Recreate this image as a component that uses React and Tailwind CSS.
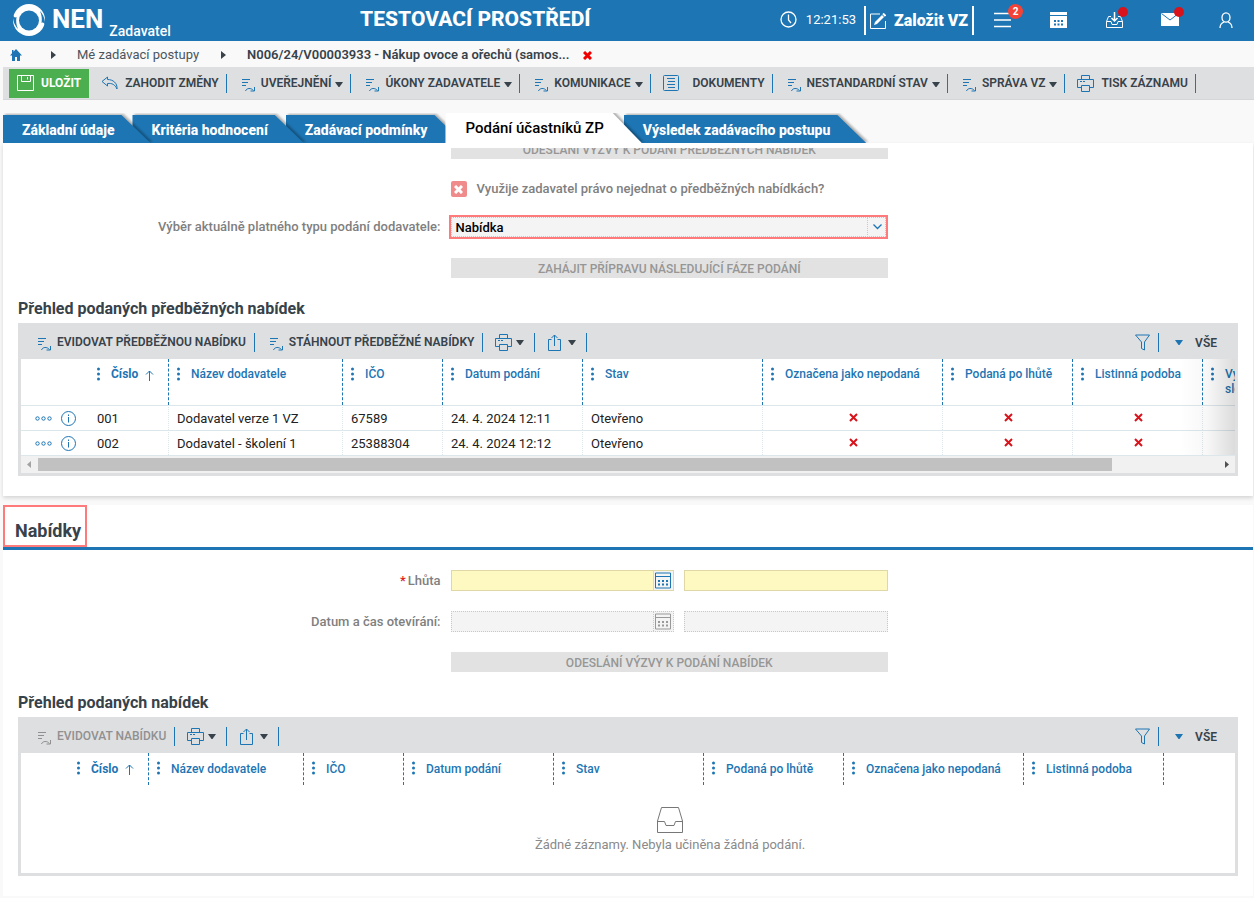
// Stránka zadávacího postupu: hlavička, panel akcí, záložky a formuláře nabídek

/* ── Ikony ─────────────────────────────────────────────────────────────── */

function Logo() {
  return (
    <svg width="34" height="34" viewBox="0 0 34 34" aria-hidden="true">
      <circle cx="17" cy="17" r="16" fill="#fff" />
      <circle cx="17" cy="17.500" r="10" fill="#1d75b3" />
      <path d="M1 12C1.500 14 3 15 4.500 14C3.800 18 4.200 22 6 26C2.500 22 .500 17 1 12Z" fill="#1d75b3" />
      <path d="M33 22C32.500 20 31 19 29.500 20C30.200 16 29.800 12 28 8C31.500 12 33.500 17 33 22Z" fill="#1d75b3" />
    </svg>
  );
}

function TaskIcon() {
  return (
    <svg width="15" height="14" viewBox="0 0 15 14" fill="none" stroke="currentColor" className="shrink-0" aria-hidden="true">
      <path d="M1 1.500H9M1 4.500H7M1 7.500H5" />
      <path d="M4.500 13C5.500 10 10 9.500 12.500 12.500" />
      <path d="M13.500 9V13H9.500" />
    </svg>
  );
}

function PrinterIcon() {
  return (
    <svg width="17" height="17" viewBox="0 0 17 17" fill="none" stroke="currentColor" className="shrink-0" aria-hidden="true">
      <path d="M4.500 4V.500H12.500V4M4.500 12.500H.500V4.500H16.500V12.500H12.500M4.500 10.500H12.500V16.500H4.500Z" />
      <path d="M3 6.500H5M6 6.500H8" />
    </svg>
  );
}

function ShareIcon() {
  return (
    <svg width="15" height="17" viewBox="0 0 15 17" fill="none" stroke="currentColor" className="shrink-0" aria-hidden="true">
      <path d="M4.500 5.500H1.500V16.500H13.500V5.500H10.500M7.500 12V1M4.500 4L7.500 1L10.500 4" />
    </svg>
  );
}

function UndoIcon() {
  return (
    <svg width="17" height="14" viewBox="0 0 17 14" fill="none" stroke="currentColor" strokeLinejoin="round" className="shrink-0" aria-hidden="true">
      <path d="M6.500 1L1 5.500L6.500 10V7.500C11 7 14 8.500 16 13C16.500 7 12 3.500 6.500 3.500Z" />
    </svg>
  );
}

function DocumentIcon() {
  return (
    <svg width="17" height="17" viewBox="0 0 17 17" fill="none" stroke="currentColor" className="shrink-0" aria-hidden="true">
      <rect x=".5" y=".5" width="15" height="15" rx="1" />
      <path d="M4 3.500H12M5 6.500H12M4 9.500H12M5 12.500H12" />
    </svg>
  );
}

function SaveIcon() {
  return (
    <svg width="17" height="17" viewBox="0 0 17 17" fill="none" stroke="currentColor" className="shrink-0" aria-hidden="true">
      <path d="M.5 .5H16.500V15.500H.500ZM4.500 .5V6.500H13.500V.500M10.500 2V4.500" />
    </svg>
  );
}

function FilterIcon() {
  return (
    <svg width="15" height="17" viewBox="0 0 15 17" fill="none" stroke="currentColor" aria-hidden="true">
      <path d="M.5 1H14.500L9.500 8V16L6.500 14.500V8Z" />
    </svg>
  );
}

function Caret() {
  return (
    <svg width="8" height="5" viewBox="0 0 8 5" fill="currentColor" className="shrink-0" aria-hidden="true">
      <path d="M0 0H8L4.500 5H3.500Z" />
    </svg>
  );
}

function CalendarIcon() {
  return (
    <svg width="16" height="17" viewBox="0 0 16 17" fill="none" stroke="currentColor" aria-hidden="true">
      <path d="M.5 1H15.500V16H.500ZM.5 4.500H15.500" />
      <path d="M3 9H13M3 12.500H13" strokeWidth="2" strokeDasharray="2 2" />
    </svg>
  );
}

function CrossIcon({ className = "" }) {
  return (
    <svg width="9" height="9" viewBox="0 0 9 9" stroke="currentColor" strokeWidth="2" className={className} role="img" aria-label="Ne">
      <path d="M1 1L8 8M8 1L1 8" />
    </svg>
  );
}

function Kebab() {
  return (
    <svg width="3" height="14" viewBox="0 0 3 14" fill="currentColor" className="shrink-0" aria-hidden="true">
      <circle cx="1.500" cy="2" r="1.500" />
      <circle cx="1.500" cy="7" r="1.500" />
      <circle cx="1.500" cy="12" r="1.500" />
    </svg>
  );
}

/* ── Hlavička ──────────────────────────────────────────────────────────── */

function Header() {
  return (
    <header className="h-[41px] bg-[#1d75b3] text-white flex items-center">
      <a href="#" className="flex items-center pl-3 pb-0.5 h-full">
        <Logo />
        <span className="ml-1.5 text-[26px] font-bold">NEN</span>
        <span className="ml-1.5 self-end text-[14px] leading-4 font-medium">Zadavatel</span>
      </a>
      <div className="flex-1 pb-0.5 text-center text-[21px] font-extrabold">TESTOVACÍ PROSTŘEDÍ</div>

      <svg width="17" height="17" viewBox="0 0 17 17" fill="none" stroke="currentColor" className="mb-0.5" aria-hidden="true">
        <circle cx="8.500" cy="8.500" r="7.500" strokeWidth="1.300" />
        <path d="M8.500 3.500V9L11 12" strokeWidth="1.300" />
      </svg>
      <time className="ml-[9px] mr-2 pb-0.5 text-[13px]">12:21:53</time>

      <button className="h-[29px] px-1 border-x-2 border-white flex items-center gap-2 text-base font-black whitespace-nowrap">
        <svg width="16" height="16" viewBox="0 0 16 16" fill="none" stroke="currentColor" aria-hidden="true">
          <path d="M10 1H.500V15.500H15.500V8" />
          <path d="M4 12L5 9L12 2L14 4L7 11Z" fill="currentColor" stroke="none" />
          <path d="M13 .5L15.500 3" strokeWidth="2" />
        </svg>
        Založit VZ
      </button>

      <button className="relative w-14 h-full pb-0.5 flex items-center justify-center" aria-label="Nabídka">
        <svg width="17" height="16" viewBox="0 0 17 16" stroke="currentColor" strokeWidth="1.500" aria-hidden="true">
          <path d="M0 1.500H17M0 8H17M0 14.500H17" />
        </svg>
        <span className="absolute top-1 left-[34px] size-[15px] rounded-full bg-[#f44336] text-[10px] leading-[15px] font-bold text-center">2</span>
      </button>
      <button className="w-14 h-full pb-0.5 flex items-center justify-center" aria-label="Kalendář">
        <svg width="17" height="16" viewBox="0 0 17 16" fill="currentColor" aria-hidden="true">
          <path d="M0 0H17V3H0ZM0 4H17V16H0Z" />
          <path d="M4 8H6V10H4ZM7.500 8H9.500V10H7.500ZM11 8H13V10H11ZM4 11.500H6V13.500H4ZM7.500 11.500H9.500V13.500H7.500ZM11 11.500H13V13.500H11Z" fill="#1d75b3" />
        </svg>
      </button>
      <button className="relative w-14 h-full pb-0.5 flex items-center justify-center" aria-label="Doručené">
        <svg width="17" height="17" viewBox="0 0 17 17" fill="none" stroke="currentColor" aria-hidden="true">
          <path d="M5 5.500H2.500L.500 10.500V16.500H16.500V10.500L14.500 5.500H12" />
          <path d="M.5 10.500H5L6 13.500H11L12 10.500H16.500" />
          <path d="M8.500 1V10M5.500 7L8.500 10L11.500 7" strokeWidth="1.500" />
        </svg>
        <span className="absolute top-[7px] left-8 size-2.5 rounded-full bg-[#d8131b]" />
      </button>
      <button className="relative w-14 h-full pb-0.5 flex items-center justify-center" aria-label="Zprávy">
        <svg width="18" height="13" viewBox="0 0 18 13" aria-hidden="true">
          <path d="M0 0H18V13H0Z" fill="currentColor" />
          <path d="M.5 .5L9 7L17.500 .5" fill="none" stroke="#1d75b3" />
        </svg>
        <span className="absolute top-[7px] left-8 size-2.5 rounded-full bg-[#d8131b]" />
      </button>
      <button className="w-14 h-full pb-0.5 flex items-center justify-center" aria-label="Uživatel">
        <svg width="14" height="16" viewBox="0 0 14 16" fill="none" stroke="currentColor" strokeWidth="1.300" aria-hidden="true">
          <ellipse cx="7" cy="5.500" rx="4" ry="4.700" />
          <path d="M1 16C1 12.500 2.500 11 5 10M13 16C13 12.500 11.500 11 9 10" />
        </svg>
      </button>
    </header>
  );
}

function Arrow() {
  return (
    <svg width="5" height="8" viewBox="0 0 5 8" fill="#37424a" aria-hidden="true">
      <path d="M0 0L5 4L0 8Z" />
    </svg>
  );
}

function Breadcrumb() {
  return (
    <nav className="h-[26px] pl-2.5 pt-0.5 flex items-center text-[13px] text-[#37424a]">
      <a href="#" aria-label="Domů" className="text-[#1d75b3]">
        <svg width="12" height="12" viewBox="0 0 12 12" fill="currentColor" aria-hidden="true">
          <path d="M6 0L12 6.500H10V12H7V8H5V12H2V6.500H0L2 4.300V1H3.500V2.700Z" />
        </svg>
      </a>
      <span className="ml-[29px]"><Arrow /></span>
      <a href="#" className="ml-[21px] text-[#4a555d]">Mé zadávací postupy</a>
      <span className="ml-[22px]"><Arrow /></span>
      <a href="#" className="ml-[21px] font-semibold">N006/24/V00003933 - Nákup ovoce a ořechů (samos...</a>
      <button className="ml-3.5 text-[#f00000]" aria-label="Zavřít">
        <svg width="9" height="9" viewBox="0 0 9 9" stroke="currentColor" strokeWidth="3" aria-hidden="true">
          <path d="M1 1L8 8M8 1L1 8" />
        </svg>
      </button>
    </nav>
  );
}

/* ── Panel akcí ────────────────────────────────────────────────────────── */

const actions = [
  { label: "UVEŘEJNĚNÍ", caret: true },
  { label: "ÚKONY ZADAVATELE", caret: true },
  { label: "KOMUNIKACE", caret: true },
  { label: "DOKUMENTY", icon: <DocumentIcon />, wide: true },
  { label: "NESTANDARDNÍ STAV", caret: true },
  { label: "SPRÁVA VZ", caret: true },
  { label: "TISK ZÁZNAMU", icon: <PrinterIcon /> },
];

function ActionBar() {
  return (
    <div className="ml-[3px] h-[33px] pl-1.5 bg-[#dedfe1] border-b border-[#d5d6d8] flex items-center text-xs font-semibold text-[#37424a] whitespace-nowrap">
      <button className="h-[29px] px-2 bg-[#4bae4f] text-white font-bold flex items-center gap-[7px]">
        <SaveIcon />
        ULOŽIT
      </button>
      <button className="h-[19px] pl-3 pr-[7px] border-r border-[#1d75b3] flex items-center gap-[7px]">
        <span className="text-[#1d75b3]"><UndoIcon /></span>
        ZAHODIT ZMĚNY
      </button>
      {actions.map((a) => (
        <button
          key={a.label}
          className={`h-[19px] border-r border-[#1d75b3] flex items-center ${a.icon ? "pl-3 pr-[7px]" : "pl-3.5 pr-[7px]"}`}
        >
          <span className={`text-[#1d75b3] ${a.wide ? "mr-[13px]" : a.icon ? "mr-[7px]" : "mr-[5px] pt-1"}`}>
            {a.icon || <TaskIcon />}
          </span>
          {a.label}
          {a.caret && <span className="ml-1 pt-0.5"><Caret /></span>}
        </button>
      ))}
    </div>
  );
}

/* ── Záložky ───────────────────────────────────────────────────────────── */

const tabs = [
  { label: "Základní údaje", z: "z-30" },
  { label: "Kritéria hodnocení", z: "z-20" },
  { label: "Zadávací podmínky", z: "z-10" },
  { label: "Podání účastníků ZP", z: "z-40", active: true },
  { label: "Výsledek zadávacího postupu", z: "z-0" },
];

function Tabs() {
  return (
    <div role="tablist" className="isolate mt-[13px] ml-[3px] h-[30px] flex items-end overflow-hidden">
      {tabs.map((t) => (
        <button
          key={t.label}
          role="tab"
          aria-selected={!!t.active}
          className={`relative whitespace-nowrap ${t.z} ${
            t.active
              ? "h-[30px] px-5 text-[15px] font-medium text-black"
              : "h-7 pl-[19px] pr-[18px] pt-0.5 text-sm font-extrabold text-white"
          }`}
        >
          <span className="absolute inset-y-0 left-0 -right-[18px] -z-10 drop-shadow-[2px_-1px_1px_rgba(0,0,0,0.3)]">
            <span
              className={`block h-full [clip-path:polygon(0_0,calc(100%_-_29px)_0,100%_100%,0_100%)] ${
                t.active ? "bg-white" : "bg-[#1d75b3]"
              }`}
            />
          </span>
          {t.label}
        </button>
      ))}
    </div>
  );
}

/* ── Formulář ──────────────────────────────────────────────────────────── */

function Field({ label, htmlFor, required, children }) {
  return (
    <div className="flex items-center gap-2.5">
      <div className="w-[35%] text-right text-[13px] leading-5 font-medium text-[#808080]">
        {required && <span className="mr-0.5 text-[#e02020]">*</span>}
        {label && <label htmlFor={htmlFor}>{label}</label>}
      </div>
      <div className="w-[35%]">{children}</div>
    </div>
  );
}

function WideButton({ children }) {
  return (
    <button disabled className="block w-full h-5 pt-px bg-[#e2e2e2] text-center text-xs leading-5 font-medium text-[#969696]">
      {children}
    </button>
  );
}

function DateTimeField({ id, disabled }) {
  const tone = disabled ? "border-dotted border-[#c8c8c8] bg-[#f4f4f4]" : "border-[#dfd7a5] bg-[#fef8c1]";
  return (
    <div className="flex gap-2.5">
      <div className={`flex-1 min-w-0 flex h-[21px] border ${tone}`}>
        <input id={id} disabled={disabled} className="flex-1 min-w-0" />
        <button
          disabled={disabled}
          aria-label="Vybrat datum"
          className={`w-5 pl-px border-l bg-[#f4f4f4] ${
            disabled ? "border-dotted border-[#c8c8c8] text-[#999]" : "border-[#d8d8d8] text-[#1d75b3]"
          }`}
        >
          <CalendarIcon />
        </button>
      </div>
      <input disabled={disabled} aria-label="Čas" className={`w-[204px] h-[21px] border ${tone}`} />
    </div>
  );
}

/* ── Tabulky ───────────────────────────────────────────────────────────── */

function GridToolbar({ buttons, disabled }) {
  return (
    <div className="h-9 pt-[3px] pl-4 pr-[18px] flex items-center text-xs font-semibold text-[#37424a] whitespace-nowrap">
      {buttons.map((b, i) => (
        <button
          key={b}
          disabled={disabled}
          className={`h-[19px] pb-px pr-2 border-r border-[#1d75b3] flex items-center gap-[5px] ${i ? "pl-3.5" : ""} ${
            disabled ? "font-medium text-[#909090]" : ""
          }`}
        >
          <span className={`pt-1 ${disabled ? "" : "text-[#1d75b3]"}`}><TaskIcon /></span>
          {b}
        </button>
      ))}
      <button aria-label="Tisk" className="h-[19px] pl-3 pr-2.5 border-r border-[#1d75b3] flex items-center gap-1">
        <span className="text-[#1d75b3]"><PrinterIcon /></span>
        <Caret />
      </button>
      <button aria-label="Export" className="h-[19px] pl-3 pr-2.5 border-r border-[#1d75b3] flex items-center gap-1.5">
        <span className="text-[#1d75b3]"><ShareIcon /></span>
        <Caret />
      </button>
      <button aria-label="Filtr" className="ml-auto h-[19px] pr-2 border-r border-[#1d75b3] flex items-center text-[#1d75b3]">
        <FilterIcon />
      </button>
      <button className="pl-4 flex items-center gap-3">
        <span className="text-[#1d75b3]"><Caret /></span>
        VŠE
      </button>
    </div>
  );
}

function HeadCell({ label, sorted, tall }) {
  return (
    <th
      scope="col"
      className={`p-0 pt-2 align-top text-left text-xs font-medium border-r border-dashed border-[#1d75b3] ${
        tall ? "h-[46px]" : "h-8"
      }`}
    >
      <div className={`pl-2 flex gap-[11px] ${tall ? "leading-[15px]" : "leading-4"} ${sorted ? "font-bold" : ""}`}>
        <Kebab />
        <span>{label}</span>
        {sorted && (
          <svg width="9" height="11" viewBox="0 0 9 11" fill="none" stroke="currentColor" className="-ml-1 mt-[3px]" aria-hidden="true">
            <path d="M4.500 11V1M1 4.500L4.500 1L8 4.500" />
          </svg>
        )}
      </div>
    </th>
  );
}

const preliminary = [
  ["001", "Dodavatel verze 1 VZ", "67589", "24. 4. 2024 12:11", "Otevřeno"],
  ["002", "Dodavatel - školení 1", "25388304", "24. 4. 2024 12:12", "Otevřeno"],
];

function PreliminaryTable() {
  return (
    <div className="relative overflow-hidden bg-white">
      <table className="w-[1272px] table-fixed border-separate border-spacing-0">
        <colgroup>
          <col className="w-[68px]" />
          <col className="w-20" />
          <col className="w-[174px]" />
          <col className="w-[100px]" />
          <col className="w-[140px]" />
          <col className="w-[180px]" />
          <col className="w-[180px]" />
          <col className="w-[130px]" />
          <col className="w-[130px]" />
          <col className="w-[90px]" />
        </colgroup>
        <thead className="text-[#1d75b3]">
          <tr>
            <td />
            <HeadCell label="Číslo" sorted tall />
            <HeadCell label="Název dodavatele" tall />
            <HeadCell label="IČO" tall />
            <HeadCell label="Datum podání" tall />
            <HeadCell label="Stav" tall />
            <HeadCell label="Označena jako nepodaná" tall />
            <HeadCell label="Podaná po lhůtě" tall />
            <HeadCell label="Listinná podoba" tall />
            <HeadCell label="Vyloučen sloučen" tall />
          </tr>
        </thead>
        <tbody className="text-[13px] leading-5 text-[#222]">
          {preliminary.map((row) => (
            <tr key={row[0]}>
              <td className="h-[25px] p-0 pl-3.5 border-t border-[#dce7ec]">
                <div className="h-6 flex items-center gap-[9px] text-[#1d75b3]">
                  <button aria-label="Akce">
                    <svg width="17" height="5" viewBox="0 0 17 5" fill="none" stroke="currentColor" aria-hidden="true">
                      <circle cx="2.500" cy="2.500" r="1.700" />
                      <circle cx="8.500" cy="2.500" r="1.700" />
                      <circle cx="14.500" cy="2.500" r="1.700" />
                    </svg>
                  </button>
                  <button aria-label="Detail">
                    <svg width="15" height="15" viewBox="0 0 15 15" fill="none" stroke="currentColor" aria-hidden="true">
                      <circle cx="7.500" cy="7.500" r="7" />
                      <path d="M7.500 6V11.500M7.500 3.500V5" />
                    </svg>
                  </button>
                </div>
              </td>
              {row.map((value, i) => (
                <td key={i} className="p-0 pt-0.5 pl-2 border-t border-t-[#dce7ec] border-r border-r-[#dce7ec] [border-right-style:dotted]">
                  {value}
                </td>
              ))}
              {[0, 1, 2].map((i) => (
                <td key={i} className="p-0 pb-0.5 pl-0.5 border-t border-t-[#dce7ec] border-r border-r-[#dce7ec] [border-right-style:dotted] text-[#d8131b]">
                  <CrossIcon className="mx-auto" />
                </td>
              ))}
              <td className="border-t border-[#dce7ec]" />
            </tr>
          ))}
        </tbody>
      </table>
      <div className="absolute inset-y-0 right-0 w-14 bg-linear-to-r from-transparent via-black/3 to-black/14" />
    </div>
  );
}

function ScrollBar() {
  return (
    <div className="h-[18px] border-t border-[#dce7ec] bg-[#f1f1f1] flex items-center justify-between px-1.5">
      <svg width="4" height="7" viewBox="0 0 4 7" fill="#a3a3a3" aria-hidden="true">
        <path d="M4 0V7L0 3.500Z" />
      </svg>
      <div className="flex-1 mx-[7px]">
        <div className="w-[91%] h-[13px] bg-[#c1c1c1]" />
      </div>
      <svg width="4" height="7" viewBox="0 0 4 7" fill="#505050" aria-hidden="true">
        <path d="M0 0V7L4 3.500Z" />
      </svg>
    </div>
  );
}

function OffersTable() {
  return (
    <div className="h-[120px] overflow-hidden bg-white">
      <table className="w-[1143px] table-fixed border-separate border-spacing-0">
        <colgroup>
          <col className="w-12" />
          <col className="w-20" />
          <col className="w-[155px]" />
          <col className="w-[100px]" />
          <col className="w-[150px]" />
          <col className="w-[150px]" />
          <col className="w-[140px]" />
          <col className="w-[180px]" />
          <col className="w-[140px]" />
        </colgroup>
        <thead className="text-[#1d75b3]">
          <tr>
            <td />
            <HeadCell label="Číslo" sorted />
            <HeadCell label="Název dodavatele" />
            <HeadCell label="IČO" />
            <HeadCell label="Datum podání" />
            <HeadCell label="Stav" />
            <HeadCell label="Podaná po lhůtě" />
            <HeadCell label="Označena jako nepodaná" />
            <HeadCell label="Listinná podoba" />
          </tr>
        </thead>
      </table>
      <div className="w-[1298px] pt-[22px] flex flex-col items-center text-[13px] text-[#8a8a8a]">
        <svg width="26" height="26" viewBox="0 0 26 26" fill="none" stroke="#777" aria-hidden="true">
          <path d="M4.500 .5H21.500L25.500 14V25.500H.5V14Z" />
          <path d="M.5 14.500H7.500L9 18.500H17L18.500 14.500H25.500" />
        </svg>
        <p className="mt-0.5">Žádné záznamy. Nebyla učiněna žádná podání.</p>
      </div>
    </div>
  );
}

/* ── Stránka ───────────────────────────────────────────────────────────── */

export default function App() {
  return (
    <div className="min-h-screen bg-[#f9f9f9] font-[Roboto,sans-serif]">
      <Header />
      <Breadcrumb />
      <ActionBar />
      <Tabs />

      <main className="ml-[3px] mr-px">
        <section className="pt-[5px] pb-5 bg-white shadow-[0_2px_4px_rgba(0,0,0,0.15)]">
          <div className="overflow-hidden">
            <div className="-mt-[9px]">
              <Field><WideButton>ODESLÁNÍ VÝZVY K PODÁNÍ PŘEDBĚŽNÝCH NABÍDEK</WideButton></Field>
            </div>
          </div>
          <div className="mt-5">
            <Field>
              <div className="flex items-center gap-2.5">
                <span className="relative size-4">
                  <input id="nejednat" type="checkbox" disabled className="block size-4 appearance-none rounded-[2px] bg-[#ef8b8b]" />
                  <CrossIcon className="absolute inset-0 m-auto text-white stroke-3" />
                </span>
                <label htmlFor="nejednat" className="text-[13px] leading-5 font-medium text-[#808080] whitespace-nowrap">
                  Využije zadavatel právo nejednat o předběžných nabídkách?
                </label>
              </div>
            </Field>
          </div>
          <div className="mt-4">
            <Field label="Výběr aktuálně platného typu podání dodavatele:" htmlFor="typ">
              <div className="relative -ml-0.5 h-6 border-2 border-[#ff7b7b] bg-[#f4f4f4]">
                <select id="typ" className="block w-full h-5 pl-1 pt-px appearance-none border border-dotted border-[#c8c8c8] text-[13px] leading-4 font-medium text-black">
                  <option>Nabídka</option>
                </select>
                <span className="absolute inset-y-0 right-0 w-[19px] border-l border-dotted border-[#c8c8c8] flex items-center justify-center text-[#1d75b3] pointer-events-none">
                  <svg width="9" height="6" viewBox="0 0 9 6" fill="none" stroke="currentColor" strokeWidth="1.300" aria-hidden="true">
                    <path d="M.5 .5L4.500 4.500L8.500 .5" />
                  </svg>
                </span>
              </div>
            </Field>
          </div>
          <div className="mt-[19px]">
            <Field><WideButton>ZAHÁJIT PŘÍPRAVU NÁSLEDUJÍCÍ FÁZE PODÁNÍ</WideButton></Field>
          </div>

          <div className="ml-[15px] mr-[15px]">
            <h3 className="mt-[21px] mb-1 text-base leading-5 font-bold text-[#37424a]">Přehled podaných předběžných nabídek</h3>
            <div className="px-[3px] pb-[3px] bg-[#dedfe1]">
              <GridToolbar buttons={["EVIDOVAT PŘEDBĚŽNOU NABÍDKU", "STÁHNOUT PŘEDBĚŽNÉ NABÍDKY"]} />
              <PreliminaryTable />
              <ScrollBar />
            </div>
          </div>
        </section>

        <section className="mt-[9px] pb-5 bg-white">
          <div className="border-b-3 border-[#1d75b3] flex">
            <h2 className="h-[42px] pl-2.5 pr-1 pt-2.5 border-2 border-[#ff7b7b] text-lg leading-7 font-bold text-[#37424a]">Nabídky</h2>
          </div>
          <div className="mt-5">
            <Field label="Lhůta" htmlFor="lhuta" required><DateTimeField id="lhuta" /></Field>
          </div>
          <div className="mt-5">
            <Field label="Datum a čas otevírání:" htmlFor="otevirani"><DateTimeField id="otevirani" disabled /></Field>
          </div>
          <div className="mt-5">
            <Field><WideButton>ODESLÁNÍ VÝZVY K PODÁNÍ NABÍDEK</WideButton></Field>
          </div>

          <div className="ml-[15px] mr-[15px]">
            <h3 className="mt-[21px] mb-1 text-base leading-5 font-bold text-[#37424a]">Přehled podaných nabídek</h3>
            <div className="px-[3px] pb-[3px] bg-[#dedfe1]">
              <GridToolbar buttons={["EVIDOVAT NABÍDKU"]} disabled />
              <OffersTable />
            </div>
          </div>
        </section>
      </main>
    </div>
  );
}
